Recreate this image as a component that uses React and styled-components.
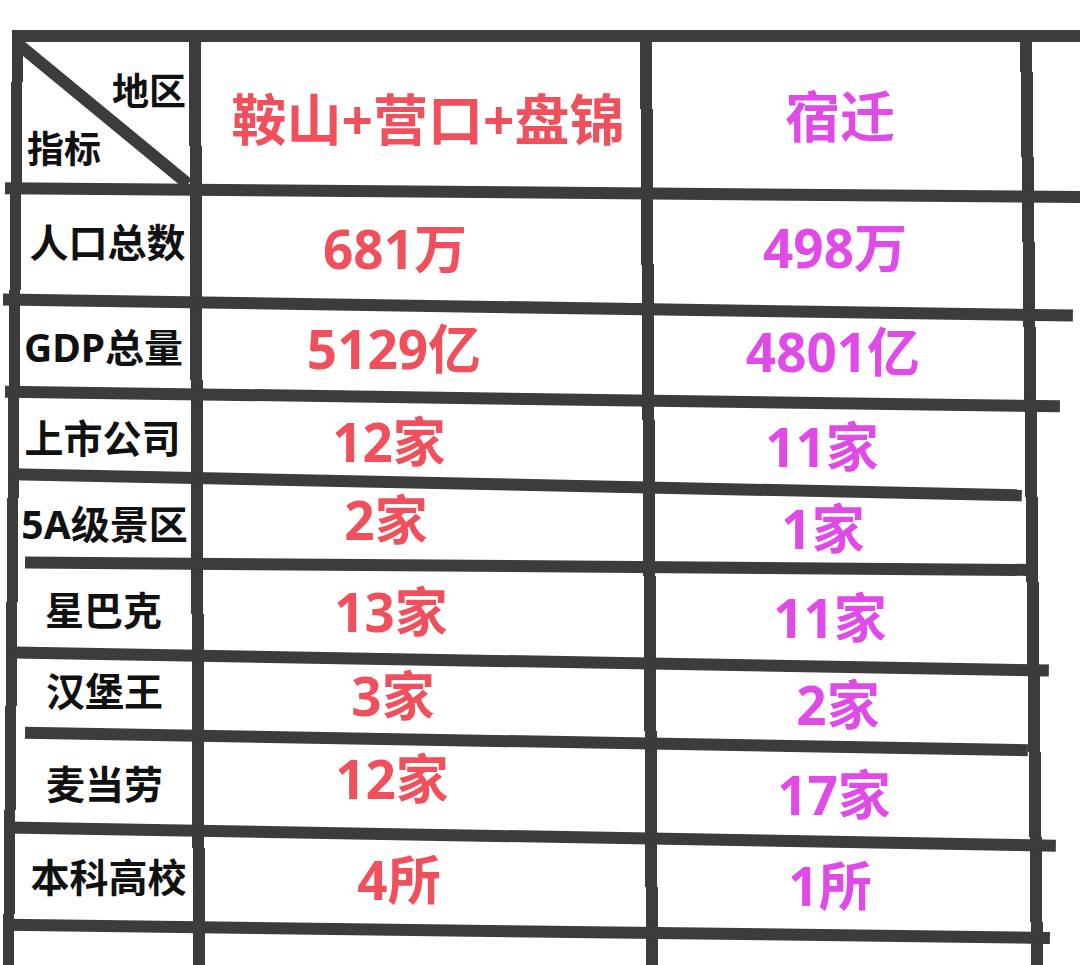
import React from 'react';
import styled, { createGlobalStyle } from 'styled-components';

const INK = '#3c3c3c';
const RED = '#f0505b';
const PINK = '#e04ae6';
const SHEET_H = 935;

const Global = createGlobalStyle`
  html, body { margin: 0; padding: 0; background: #ffffff; }
  body {
    width: 1080px;
    height: 965px;
    overflow: hidden;
    font-family: "Noto Sans", "Noto Sans CJK SC", sans-serif;
  }
`;

/* a hand-drawn vertical stroke: starts at x (top) and drifts by `drift` px at the bottom */
const stroke = (x, drift, w = 11) => {
  const k = SHEET_H / Math.hypot(SHEET_H, drift);
  const a = (Math.abs(drift) * k).toFixed(2);
  const b = (Math.abs(drift) * k + w * k).toFixed(2);
  const ang = (90 - (Math.atan(drift / SHEET_H) * 180) / Math.PI).toFixed(3);
  const left = Math.min(x, x + drift);
  return `linear-gradient(${ang}deg, transparent ${a}px, ${INK} ${a}px, ${INK} ${b}px, transparent ${b}px) ${left}px 0 / ${w + Math.abs(drift)}px 100% no-repeat`;
};

const Sheet = styled.div`
  margin-top: 30px;
  width: 1080px;
  height: ${SHEET_H}px;
  display: flex;
  flex-direction: column;
  background: ${stroke(12, -9)}, ${stroke(189, 4, 12)}, ${stroke(640, 6, 12)},
    ${stroke(1020, 11, 12)};
`;

const Rule = styled.div`
  flex: none;
  height: 12px;
  margin-left: ${(p) => p.$from}px;
  width: ${(p) => p.$to - p.$from}px;
  background: ${INK};
  transform-origin: ${(p) => 100 - p.$from}px 50%;
  transform: rotate(${(p) => p.$tilt}deg);
`;

const Row = styled.div`
  flex: ${(p) => (p.$h ? 'none' : '1')};
  height: ${(p) => (p.$h ? `${p.$h}px` : 'auto')};
  display: grid;
  grid-template-columns: 167px 440px 370px 1fr;
  column-gap: 11px;
  padding-left: 23px;
`;

const Cell = styled.div`
  display: flex;
  align-items: center;
  justify-content: center;
  white-space: nowrap;
  line-height: 1;
`;

const Text = styled.span`
  display: block;
  font-weight: 700;
  font-size: ${(p) => p.$size}px;
  color: ${(p) => p.$color};
  transform: translate(${(p) => p.$dx || 0}px, ${(p) => p.$dy || 0}px);
`;

const Corner = styled.div`
  position: relative;
  display: flex;
  flex-direction: column;
  justify-content: space-between;
  padding: 30px 4px 16px 4px;
  line-height: 1;
`;

const CornerText = styled.span`
  font-weight: 700;
  font-size: 37px;
  color: #111;
  align-self: ${(p) => (p.$end ? 'flex-end' : 'flex-start')};
  position: relative;
  z-index: 1;
`;

const Diagonal = styled.svg`
  position: absolute;
  left: 0;
  top: 0;
  width: 167px;
  height: 141px;
  overflow: visible;
`;

const rows = [
  { h: 100, label: '人口总数', ldx: 1, ldy: -4, a: '681万', adx: -26, ady: 3, b: '498万', bdx: -2, bdy: 2 },
  { h: 80, label: 'GDP总量', ldx: -3, ldy: -1, a: '5129亿', adx: -27, ady: 1, b: '4801亿', bdx: -4, bdy: 4 },
  { h: 71, label: '上市公司', ldx: -4, ldy: 3, a: '12家', adx: -32, ady: 7, b: '11家', bdx: -15, bdy: 12 },
  { h: 75, label: '5A级景区', ldx: -2, ldy: 4, a: '2家', adx: -35, ady: 0, b: '1家', bdx: -14, bdy: 9 },
  { h: 79, label: '星巴克', ldx: -3, ldy: 1, a: '13家', adx: -30, ady: 3, b: '11家', bdx: -7, bdy: 9 },
  { h: 68, label: '汉堡王', ldx: -2, ldy: -4, a: '3家', adx: -28, ady: 1, b: '2家', bdx: 1, bdy: 10 },
  { h: 83, label: '麦当劳', ldx: -2, ldy: 2, a: '12家', adx: -29, ady: -3, b: '17家', bdx: -3, bdy: 13 },
  { h: 85, label: '本科高校', ldx: 2, ldy: -1, a: '4所', adx: -22, ady: 2, b: '1所', bdx: -7, bdy: 8 },
];

const rules = [
  { from: 5, to: 1080, tilt: 0.47 },
  { from: 3, to: 1073, tilt: 0.86 },
  { from: 5, to: 1060, tilt: 0.79 },
  { from: 12, to: 1022, tilt: 1.2 },
  { from: 25, to: 1033, tilt: 0.43 },
  { from: 14, to: 1049, tilt: 1.0 },
  { from: 25, to: 1028, tilt: 1.0 },
  { from: 8, to: 1056, tilt: 1.0 },
  { from: 8, to: 1050, tilt: 0.72 },
];

export default function App() {
  return (
    <>
      <Global />
      <Sheet>
        <Rule $from={12} $to={1080} $tilt={0} />
        <Row $h={141}>
          <Corner>
            <Diagonal viewBox="0 0 167 141">
              <line x1="-5" y1="2" x2="165" y2="142" stroke={INK} strokeWidth="12" />
            </Diagonal>
            <CornerText $end>地区</CornerText>
            <CornerText>指标</CornerText>
          </Corner>
          <Cell>
            <Text $size={55} $color={RED} $dx={7} $dy={6}>鞍山+营口+盘锦</Text>
          </Cell>
          <Cell>
            <Text $size={55} $color={PINK} $dx={3} $dy={3}>宿迁</Text>
          </Cell>
          <Cell />
        </Row>
        {rows.map((r, i) => (
          <React.Fragment key={r.label}>
            <Rule $from={rules[i].from} $to={rules[i].to} $tilt={rules[i].tilt} />
            <Row $h={r.h}>
              <Cell>
                <Text $size={39} $color="#111" $dx={r.ldx} $dy={r.ldy}>{r.label}</Text>
              </Cell>
              <Cell>
                <Text $size={53} $color={RED} $dx={r.adx} $dy={r.ady}>{r.a}</Text>
              </Cell>
              <Cell>
                <Text $size={53} $color={PINK} $dx={r.bdx} $dy={r.bdy}>{r.b}</Text>
              </Cell>
              <Cell />
            </Row>
          </React.Fragment>
        ))}
        <Rule $from={rules[8].from} $to={rules[8].to} $tilt={rules[8].tilt} />
        <Row>
          <Cell />
          <Cell />
          <Cell />
          <Cell />
        </Row>
      </Sheet>
    </>
  );
}
